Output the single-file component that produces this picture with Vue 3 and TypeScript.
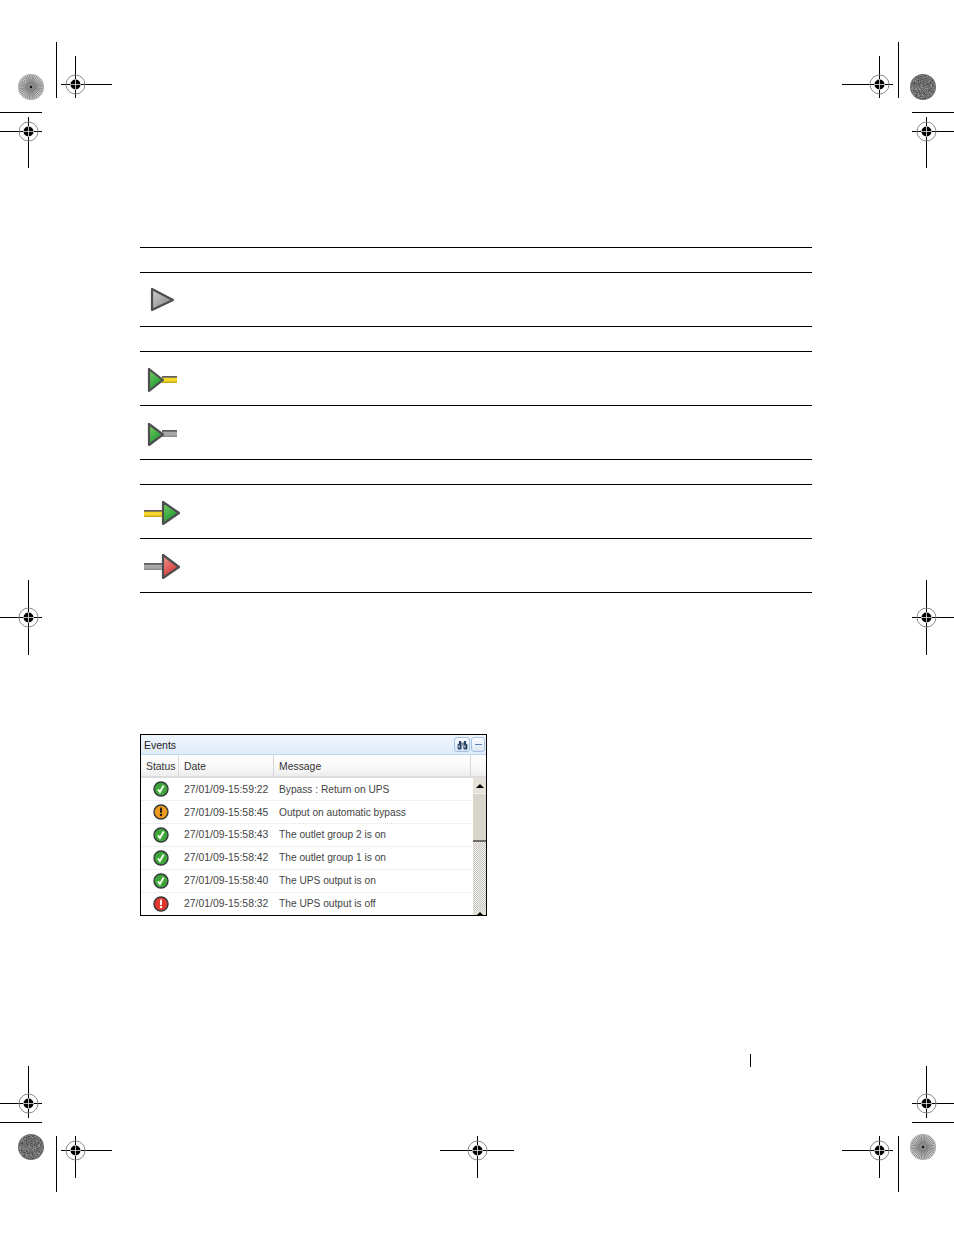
<template>
  <div class="page">
    <svg class="marks" width="954" height="1235" viewBox="0 0 954 1235">
      <line
        v-for="(l, i) in cropLines"
        :key="'l' + i"
        :x1="l[0]"
        :y1="l[1]"
        :x2="l[2]"
        :y2="l[3]"
        stroke="#000"
      />
      <g v-for="(t, i) in targets" :key="'t' + i">
        <line :x1="t.x1" :y1="t.y + 0.5" :x2="t.x2" :y2="t.y + 0.5" stroke="#000" />
        <line :x1="t.x + 0.5" :y1="t.y1" :x2="t.x + 0.5" :y2="t.y2" stroke="#000" />
        <circle :cx="t.x + 0.5" :cy="t.y + 0.5" r="9.5" fill="none" stroke="#8a8a8a" />
        <circle :cx="t.x + 0.5" :cy="t.y + 0.5" r="5" fill="#000" />
        <line :x1="t.x - 5" :y1="t.y + 0.5" :x2="t.x + 6" :y2="t.y + 0.5" stroke="#fff" stroke-width="0.7" />
        <line :x1="t.x + 0.5" :y1="t.y - 5" :x2="t.x + 0.5" :y2="t.y + 6" stroke="#fff" stroke-width="0.7" />
      </g>
      <g v-for="(s, i) in sunbursts" :key="'s' + i">
        <circle :cx="s.x" :cy="s.y" r="13" fill="#d2d2d2" />
        <line
          v-for="(r, j) in rays"
          :key="j"
          :x1="s.x + r[0] * 3"
          :y1="s.y + r[1] * 3"
          :x2="s.x + r[0] * 13"
          :y2="s.y + r[1] * 13"
          stroke="#555"
          stroke-width="0.6"
        />
        <circle :cx="s.x" :cy="s.y" r="4" fill="#8a8a8a" />
        <circle :cx="s.x" :cy="s.y" r="1.2" fill="#111" />
      </g>
      <g v-for="(d, i) in discs" :key="'d' + i">
        <circle :cx="d.x" :cy="d.y" r="13" fill="#6c6c6c" />
        <rect
          v-for="(n, j) in speckles"
          :key="j"
          :x="d.x + n[0]"
          :y="d.y + n[1]"
          width="1"
          height="1"
          :fill="n[2] ? '#8e8e8e' : '#4c4c4c'"
        />
      </g>
      <line x1="750.5" y1="1054" x2="750.5" y2="1067" stroke="#000" />
    </svg>

    <div class="doc-table">
      <div
        v-for="(row, i) in rows"
        :key="i"
        class="doc-row"
        :class="row.icon ? 'doc-row-icon' : 'doc-row-head'"
      >
        <svg v-if="row.icon" class="state-icon" width="40" height="31" viewBox="0 0 40 31">
          <template v-if="row.icon.tail">
            <rect :x="row.icon.tail.x" :y="row.icon.tail.y" :width="row.icon.tail.w" height="7" :fill="row.icon.tail.color" />
            <rect :x="row.icon.tail.x" :y="row.icon.tail.y" :width="row.icon.tail.w" height="1.7" fill="#5e5e5e" />
            <rect :x="row.icon.tail.x" :y="row.icon.tail.y + 5.6" :width="row.icon.tail.w" height="1.4" :fill="row.icon.tail.low" />
          </template>
          <polygon :points="row.icon.tri" :fill="'url(#' + row.icon.fill + ')'" stroke="#4e4e4e" stroke-width="2.2" stroke-linejoin="round" />
          <defs>
            <linearGradient id="greyFill" x1="0" y1="0" x2="1" y2="1">
              <stop offset="0" stop-color="#cfcfcf" />
              <stop offset="1" stop-color="#7e7e7e" />
            </linearGradient>
            <linearGradient id="greenFill" x1="0" y1="0" x2="0.6" y2="1">
              <stop offset="0" stop-color="#7ccf60" />
              <stop offset="1" stop-color="#169433" />
            </linearGradient>
            <linearGradient id="redFill" x1="0" y1="0" x2="0.6" y2="1">
              <stop offset="0" stop-color="#f29a90" />
              <stop offset="1" stop-color="#d42f33" />
            </linearGradient>
          </defs>
        </svg>
      </div>
    </div>

    <div class="events">
      <div class="events-title">
        <span class="events-name">Events</span>
        <button class="tool-btn tool-find" type="button">
          <svg width="11" height="10" viewBox="0 0 11 10">
            <path d="M2 1h2v1h0.6v2H1.8L2 1zM7 1h2l0.2 3H6.4V2H7V1z" fill="#27405f" />
            <rect x="0.6" y="4" width="4" height="5.4" rx="0.8" fill="#27405f" />
            <rect x="6.4" y="4" width="4" height="5.4" rx="0.8" fill="#27405f" />
            <rect x="4.5" y="3" width="2" height="2.4" fill="#7d8ea4" />
            <rect x="1.6" y="5" width="1" height="3" fill="#c9d6e6" />
            <rect x="7.4" y="5" width="1" height="3" fill="#c9d6e6" />
          </svg>
        </button>
        <button class="tool-btn tool-min" type="button"><i></i></button>
      </div>
      <div class="events-head">
        <div class="col col-status">Status</div>
        <div class="col col-date">Date</div>
        <div class="col col-msg">Message</div>
        <div class="col col-rest"></div>
      </div>
      <div class="events-body">
        <div class="event-list">
          <div v-for="(e, i) in events" :key="i" class="event">
            <div class="cell-status">
              <svg width="16" height="16" viewBox="0 0 16 16">
                <circle cx="8" cy="8" r="7" :fill="statusColors[e.status]" stroke="#33383a" stroke-width="1.4" />
                <path v-if="e.status === 'ok'" d="M4.9 8.4l2 2.6 3.8-6.4" fill="none" stroke="#f4ffe8" stroke-width="2" />
                <template v-else>
                  <rect x="7" y="3.4" width="2" height="5.6" rx="0.8" :fill="e.status === 'warn' ? '#222' : '#fff'" />
                  <circle cx="8" cy="11" r="1.2" :fill="e.status === 'warn' ? '#222' : '#fff'" />
                </template>
              </svg>
            </div>
            <div class="cell-date">{{ e.date }}</div>
            <div class="cell-msg">{{ e.message }}</div>
          </div>
        </div>
        <div class="scrollbar">
          <div class="sb-btn"><i class="arrow-up"></i></div>
          <div class="sb-thumb"></div>
          <div class="sb-track"></div>
          <div class="sb-end"><i class="arrow-up"></i></div>
        </div>
      </div>
    </div>
  </div>
</template>

<script setup lang="ts">
type Status = 'ok' | 'warn' | 'alarm'

interface StateIcon {
  tri: string
  fill: string
  tail?: { x: number; y: number; w: number; color: string; low: string }
}

const yellow = { color: '#f4d92c', low: '#c9a915' }
const grey = { color: '#a8a8a8', low: '#8c8c8c' }

// empty rows are the table's section headings
const rows: { icon?: StateIcon }[] = [
  {},
  { icon: { tri: '10,5 10,26 31,16', fill: 'greyFill' } },
  {},
  { icon: { tri: '7,6 7,28 21,17', fill: 'greenFill', tail: { x: 20, y: 13, w: 15, ...yellow } } },
  { icon: { tri: '7,7 7,28 21,17.5', fill: 'greenFill', tail: { x: 20, y: 13, w: 15, ...grey } } },
  {},
  { icon: { tri: '21,6 21,28 37,17', fill: 'greenFill', tail: { x: 2, y: 14, w: 19, ...yellow } } },
  { icon: { tri: '21,5 21,28 37,17', fill: 'redFill', tail: { x: 2, y: 13, w: 19, ...grey } } },
]

const events: { status: Status; date: string; message: string }[] = [
  { status: 'ok', date: '27/01/09-15:59:22', message: 'Bypass : Return on UPS' },
  { status: 'warn', date: '27/01/09-15:58:45', message: 'Output on automatic bypass' },
  { status: 'ok', date: '27/01/09-15:58:43', message: 'The outlet group 2 is on' },
  { status: 'ok', date: '27/01/09-15:58:42', message: 'The outlet group 1 is on' },
  { status: 'ok', date: '27/01/09-15:58:40', message: 'The UPS output is on' },
  { status: 'alarm', date: '27/01/09-15:58:32', message: 'The UPS output is off' },
]

const statusColors: Record<Status, string> = {
  ok: '#3fa53a',
  warn: '#ee9a1c',
  alarm: '#e2372f',
}

const cropLines = [
  [56.5, 42, 56.5, 98],
  [898.5, 42, 898.5, 98],
  [56.5, 1136, 56.5, 1192],
  [898.5, 1136, 898.5, 1192],
  [0, 112.5, 42, 112.5],
  [912, 112.5, 954, 112.5],
  [0, 1122.5, 42, 1122.5],
  [912, 1122.5, 954, 1122.5],
]

const targets = [
  { x: 75, y: 84, x1: 61, x2: 112, y1: 56, y2: 98 },
  { x: 879, y: 84, x1: 842, x2: 893, y1: 56, y2: 98 },
  { x: 28, y: 131, x1: 0, x2: 42, y1: 117, y2: 168 },
  { x: 926, y: 131, x1: 912, x2: 954, y1: 117, y2: 168 },
  { x: 28, y: 617, x1: 0, x2: 42, y1: 580, y2: 655 },
  { x: 926, y: 617, x1: 912, x2: 954, y1: 580, y2: 655 },
  { x: 28, y: 1103, x1: 0, x2: 42, y1: 1066, y2: 1118 },
  { x: 926, y: 1103, x1: 912, x2: 954, y1: 1066, y2: 1118 },
  { x: 75, y: 1150, x1: 61, x2: 112, y1: 1136, y2: 1178 },
  { x: 477, y: 1150, x1: 440, x2: 514, y1: 1136, y2: 1178 },
  { x: 879, y: 1150, x1: 842, x2: 893, y1: 1136, y2: 1178 },
]

const sunbursts = [
  { x: 31, y: 87 },
  { x: 923, y: 1147 },
]
const discs = [
  { x: 923, y: 87 },
  { x: 31, y: 1147 },
]

const rays: number[][] = Array.from({ length: 40 }, (_, i) => {
  const a = (i / 40) * Math.PI * 2
  return [Math.cos(a), Math.sin(a)]
})

// seeded so the grain of the grey discs stays the same on every load
let seed = 17
const next = () => {
  seed = (seed * 16807) % 2147483647
  return seed / 2147483647
}
const speckles: number[][] = []
for (let i = 0; i < 260; i++) {
  const x = Math.floor(next() * 26) - 13
  const y = Math.floor(next() * 26) - 13
  if ((x + 0.5) ** 2 + (y + 0.5) ** 2 < 150) speckles.push([x, y, next() > 0.5 ? 1 : 0])
}
</script>

<style>
html,
body {
  background: #fff;
}
</style>

<style scoped>
.page {
  position: relative;
  width: 954px;
  height: 1235px;
  padding: 247px 142px 0 140px;
  box-sizing: border-box;
  overflow: hidden;
  font-family: "Liberation Sans", Arial, sans-serif;
}

.marks {
  position: absolute;
  left: 0;
  top: 0;
}

.doc-table {
  width: 672px;
  border-bottom: 1px solid #000;
}

.doc-row {
  display: flex;
  align-items: center;
  box-sizing: border-box;
  border-top: 1px solid #000;
  padding-left: 2px;
}

.doc-row-head {
  height: 25px;
}

.doc-row-icon {
  height: 54px;
}

.state-icon {
  filter: blur(0.4px);
}

.events {
  width: 347px;
  height: 182px;
  box-sizing: border-box;
  margin-top: 141px;
  border: 1px solid #000;
  color: #3c3c3c;
  font-size: 10.2px;
  overflow: hidden;
}

.events-title {
  display: flex;
  align-items: center;
  gap: 1px;
  height: 20px;
  box-sizing: border-box;
  padding: 0 1px 0 3px;
  background: linear-gradient(#f0f6fd, #dfebf9);
  border-bottom: 1px solid #bcd6f3;
}

.events-name {
  flex: 1;
  font-size: 10.5px;
  color: #222;
}

.tool-btn {
  display: flex;
  align-items: center;
  justify-content: center;
  width: 14px;
  height: 15px;
  padding: 0;
  box-sizing: border-box;
  border: 1px solid #a5c0e2;
  border-radius: 3px;
  background: linear-gradient(#fbfdff, #dce8f6);
}

.tool-find {
  width: 16px;
}

.tool-min i {
  display: block;
  width: 7px;
  height: 1px;
  background: #5d84b4;
}

.events-head {
  display: flex;
  height: 23px;
  box-sizing: border-box;
  border-bottom: 2px solid #dcdcdc;
  background: linear-gradient(#fff, #f6f6f6 70%, #ececec);
  font-size: 10.4px;
  color: #333;
}

.col {
  display: flex;
  align-items: center;
  box-sizing: border-box;
  padding-top: 2px;
  border-right: 1px solid #d8d8d8;
}

.col-status {
  width: 38px;
  padding-left: 5px;
}

.col-date {
  width: 95px;
  padding-left: 5px;
}

.col-msg {
  width: 197px;
  padding-left: 5px;
}

.col-rest {
  flex: 1;
  border-right: 0;
}

.events-body {
  display: flex;
  height: 137px;
}

.event-list {
  width: 332px;
}

.event {
  display: flex;
  align-items: center;
  height: 23px;
  box-sizing: border-box;
  border-bottom: 1px dotted #e2e2e2;
  color: #444;
}

.event:nth-child(n + 3) .cell-date,
.event:nth-child(n + 3) .cell-msg {
  padding-bottom: 2px;
}

.cell-status {
  display: flex;
  justify-content: center;
  width: 38px;
  margin-left: 1px;
  margin-right: -1px;
}

.cell-date {
  width: 95px;
  padding-left: 5px;
  box-sizing: border-box;
  font-size: 10.4px;
}

.cell-msg {
  padding-left: 5px;
}

.scrollbar {
  display: flex;
  flex-direction: column;
  width: 13px;
  margin-left: 1px;
}

.sb-btn {
  display: flex;
  align-items: center;
  justify-content: center;
  height: 15px;
  background: #e4e1d9;
}

.arrow-up {
  width: 0;
  height: 0;
  border-left: 4px solid transparent;
  border-right: 4px solid transparent;
  border-bottom: 4px solid #000;
}

.sb-thumb {
  height: 49px;
  box-sizing: border-box;
  background: #d9d5cb;
  border-top: 1px solid #f2f0ea;
  border-bottom: 2px solid #6e6b64;
}

.sb-track {
  flex: 1;
  background: repeating-conic-gradient(#c4c2bc 0 25%, #f4f3ef 0 50%) 0 0 / 2px 2px;
}

.sb-end {
  display: flex;
  justify-content: center;
  height: 4px;
  padding-top: 1px;
  box-sizing: border-box;
  background: #e4e1d9;
}
</style>
